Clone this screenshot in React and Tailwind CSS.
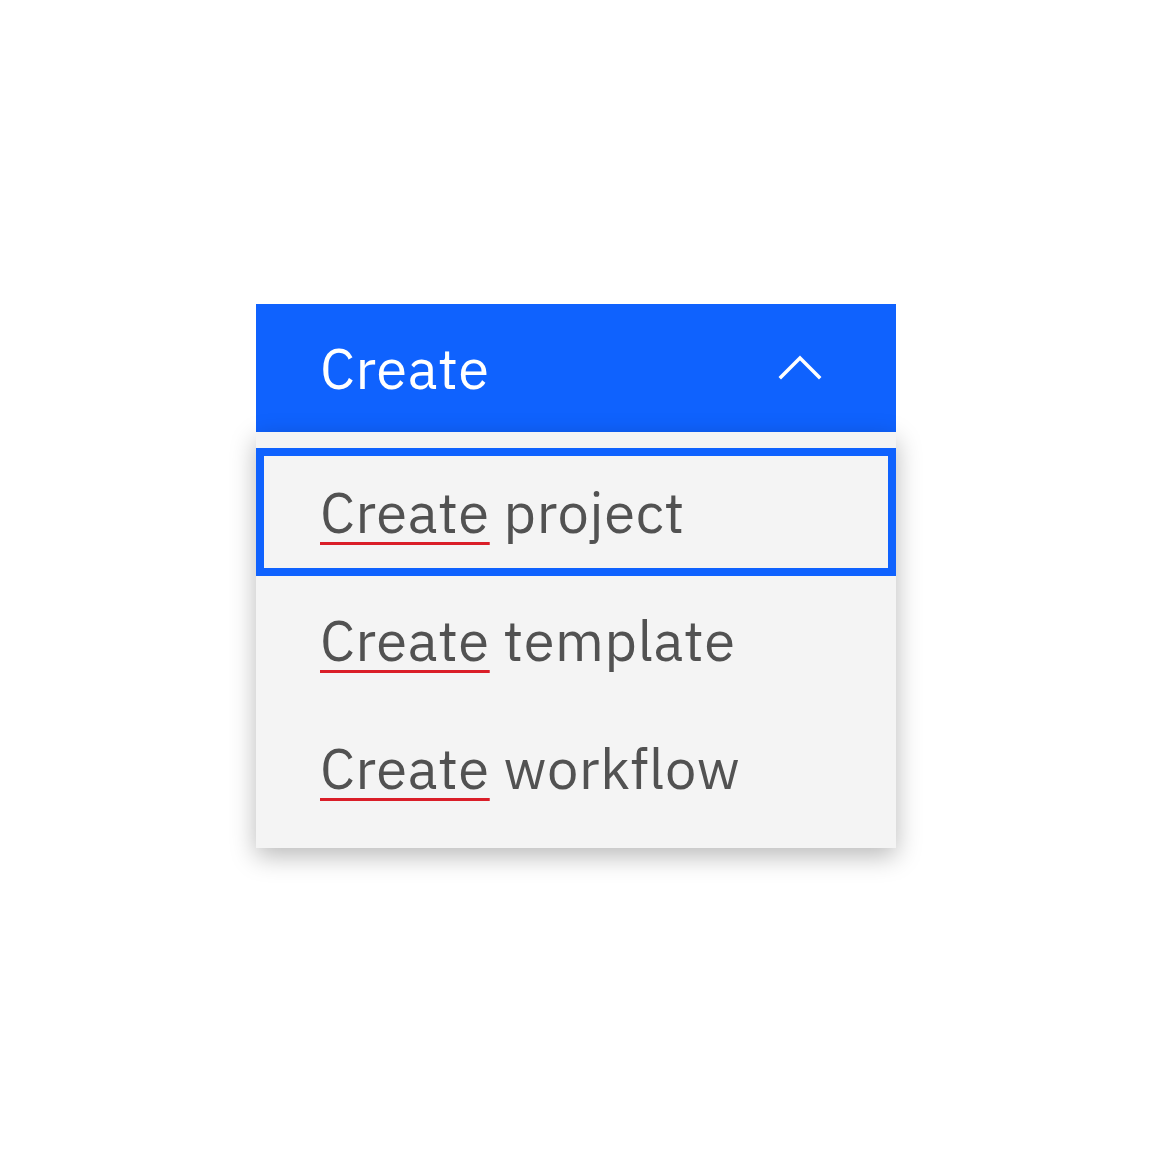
const items = [
  { id: "project", rest: "project", focused: true },
  { id: "template", rest: "template" },
  { id: "workflow", rest: "workflow" },
]

function ChevronUp() {
  return (
    <svg width="64" height="64" viewBox="0 0 64 64" fill="none" className="shrink-0">
      <path d="M13 41 L32 22 L51 41" stroke="#ffffff" strokeWidth="3.5" strokeLinecap="square" />
    </svg>
  )
}

export default function App() {
  return (
    <div
      className="flex h-[1152px] w-[1152px] items-center justify-center bg-white"
      style={{ fontFamily: '"IBM Plex Sans", "Liberation Sans", Arial, sans-serif' }}
    >
      <div className="flex w-[640px] flex-col">
        <button className="flex h-[128px] items-center justify-between bg-[#0f62fe] pl-[64px] pr-[64px] text-[56px] leading-none tracking-[0.64px] text-white">
          <span>Create</span>
          <ChevronUp />
        </button>

        <ul className="flex flex-col bg-[#f4f4f4] py-[16px] shadow-[0_8px_24px_rgba(0,0,0,0.28)]">
          {items.map((item) => (
            <li
              key={item.id}
              className={
                item.focused
                  ? "flex h-[128px] items-center border-[8px] border-[#0f62fe] pl-[56px] text-[56px] leading-none tracking-[0.64px] text-[#525252]"
                  : "flex h-[128px] items-center border-[8px] border-transparent pl-[56px] text-[56px] leading-none tracking-[0.64px] text-[#525252]"
              }
            >
              <span className="underline decoration-[#da1e28] decoration-[3px] underline-offset-[9px]">Create</span>
              <span>&nbsp;{item.rest}</span>
            </li>
          ))}
        </ul>
      </div>
    </div>
  )
}
